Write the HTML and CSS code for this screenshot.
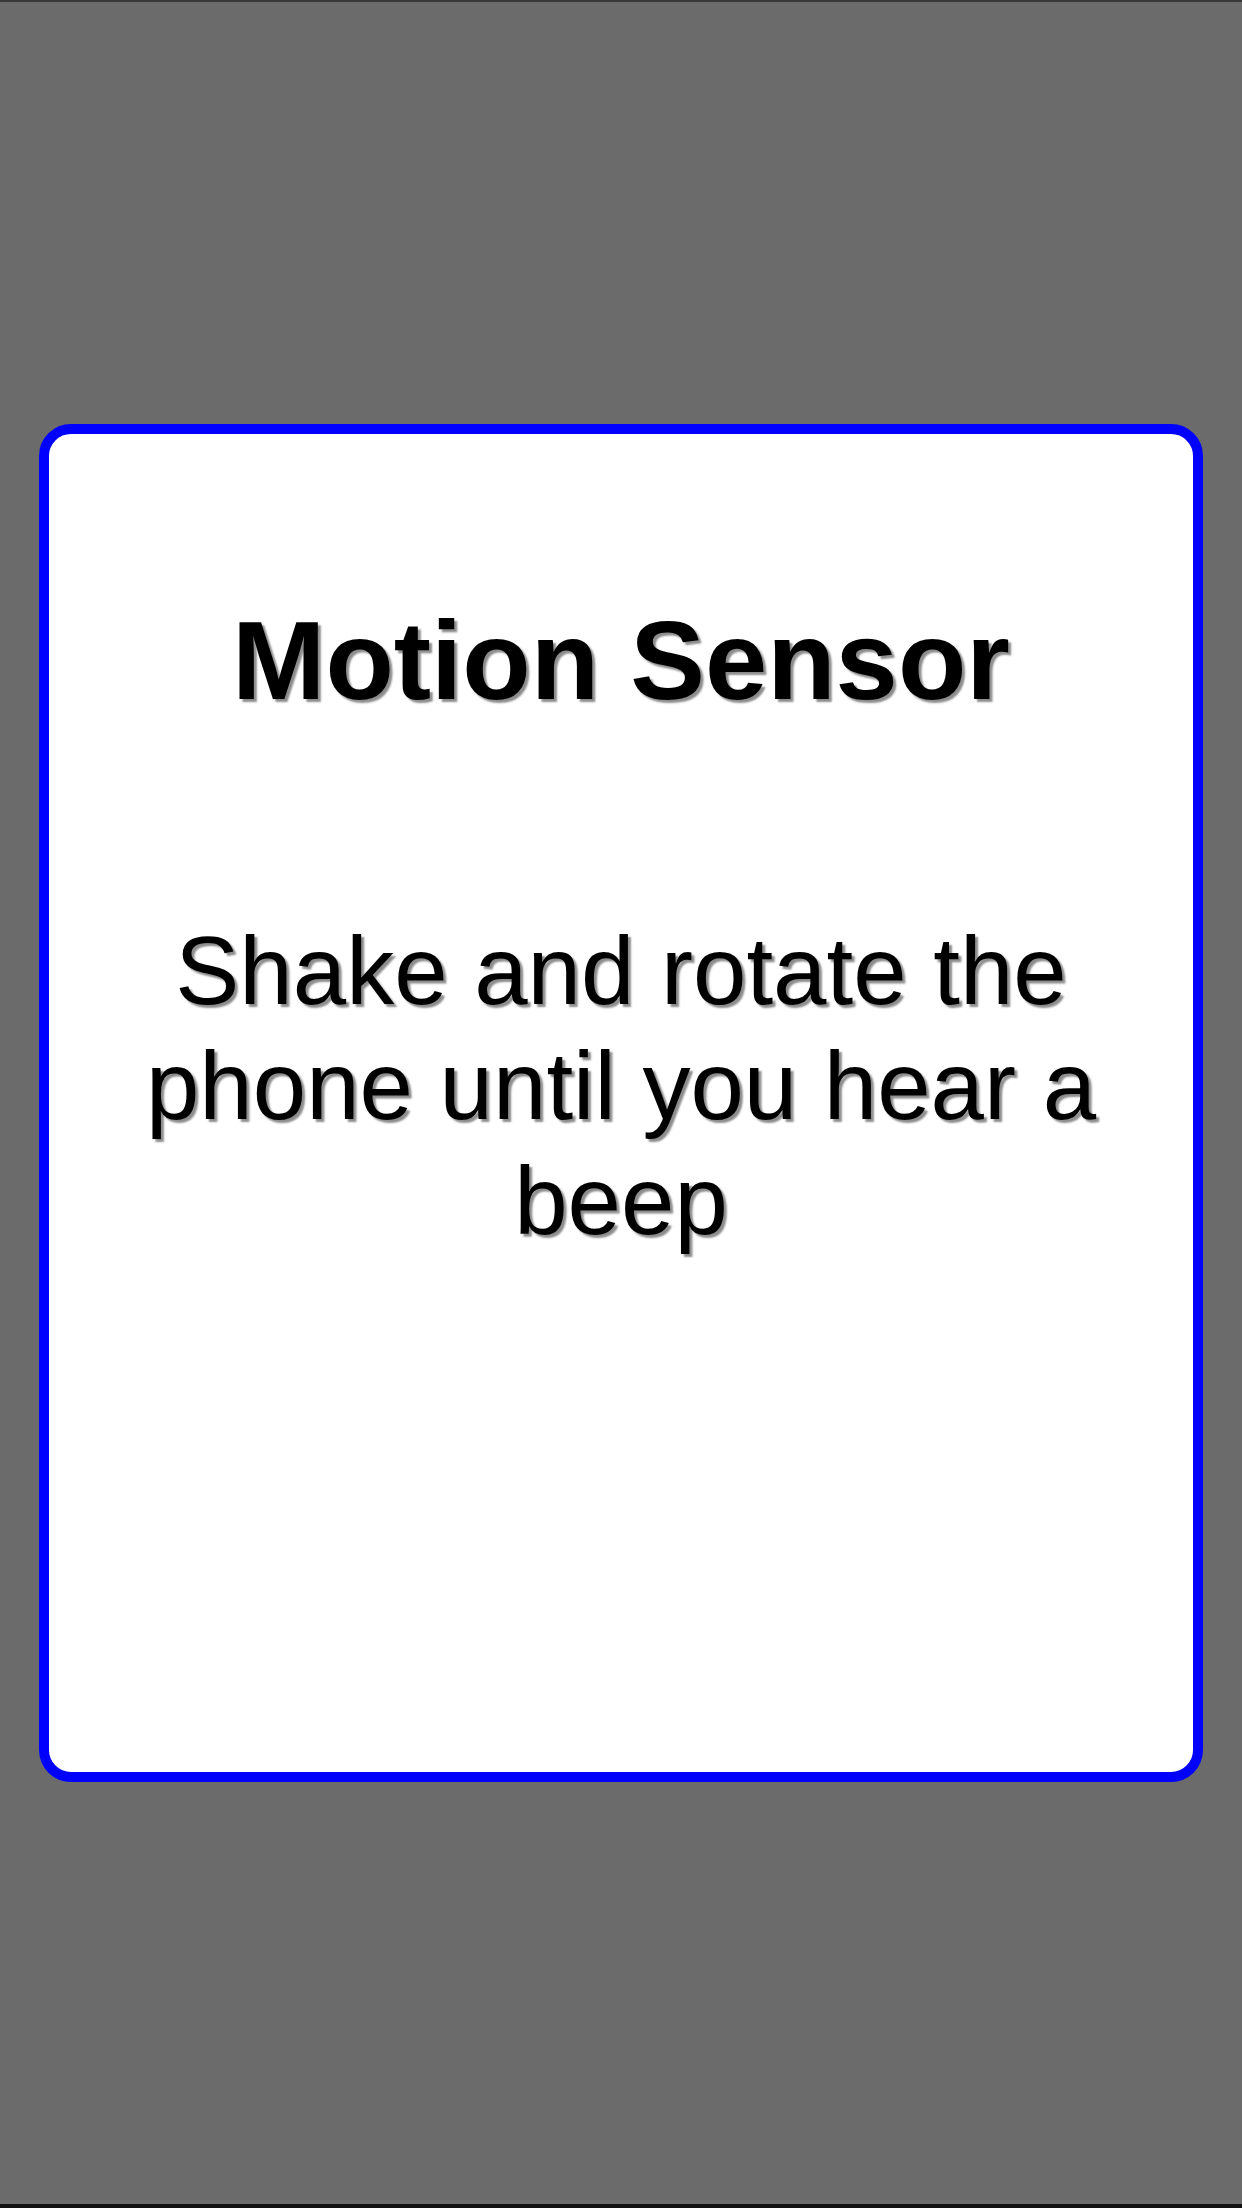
FILE: index.html
```html
<!DOCTYPE html>
<html lang="en">
<head>
<meta charset="utf-8">
<title>Motion Sensor</title>
<link rel="stylesheet" href="styles.css">
</head>
<body>
<div class="screen">
  <div class="card">
    <h1 class="title">Motion Sensor</h1>
    <p class="message">Shake and rotate the phone until you hear a beep</p>
  </div>
</div>
</body>
</html>
```
FILE: styles.css
```css
html, body {
  margin: 0;
  padding: 0;
}
body {
  width: 1242px;
  height: 2208px;
  background: #6b6b6b;
  font-family: "Liberation Sans", Arial, sans-serif;
  overflow: hidden;
}
.screen {
  box-sizing: border-box;
  width: 1242px;
  height: 2208px;
  display: flex;
  align-items: center;
  justify-content: center;
  border-top: 2px solid #383838;
  border-bottom: 4px solid #111;
}
.card {
  box-sizing: border-box;
  width: 1164px;
  height: 1358px;
  background: #fff;
  border: 10px solid #0000ff;
  border-radius: 32px;
  padding: 163px 40px 0;
  display: flex;
  flex-direction: column;
  align-items: center;
  text-align: center;
}
.title {
  margin: 0;
  font-size: 112px;
  font-weight: bold;
  line-height: 1.15;
  color: #000;
  text-shadow: 3px 3px 2px rgba(0, 0, 0, 0.45);
}
.message {
  margin: 187px 0 0;
  font-size: 96px;
  font-weight: normal;
  line-height: 1.2;
  color: #000;
  text-shadow: 3px 3px 2px rgba(0, 0, 0, 0.45);
}
```
